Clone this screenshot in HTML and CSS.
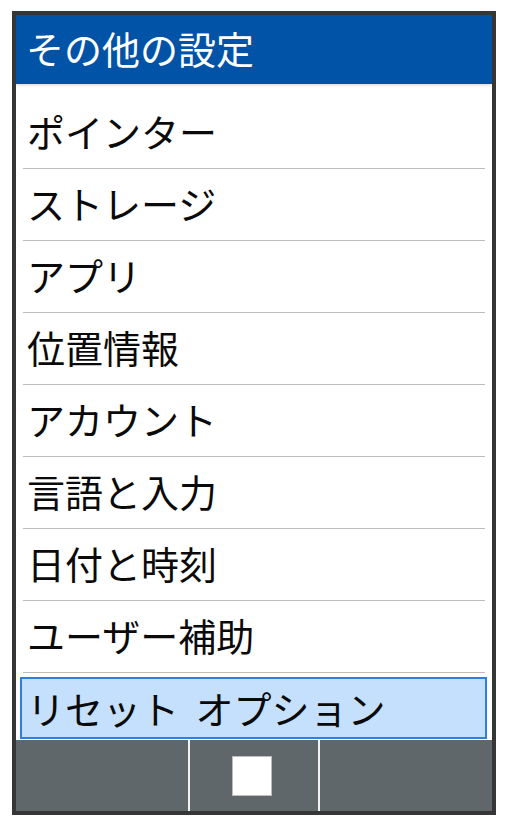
FILE: index.html
```html
<!DOCTYPE html>
<html lang="ja">
<head>
<meta charset="utf-8">
<link rel="stylesheet" href="styles.css">
</head>
<body>
<div class="phone">
  <header class="title-bar">その他の設定</header>
  <ul class="menu">
    <li class="item">ポインター</li>
    <li class="item">ストレージ</li>
    <li class="item">アプリ</li>
    <li class="item">位置情報</li>
    <li class="item">アカウント</li>
    <li class="item">言語と入力</li>
    <li class="item">日付と時刻</li>
    <li class="item">ユーザー補助</li>
    <li class="item selected">リセット オプション</li>
  </ul>
  <footer class="softkeys">
    <div class="key"></div>
    <div class="key center"><span class="stop"></span></div>
    <div class="key"></div>
  </footer>
</div>
</body>
</html>
```
FILE: styles.css
```css
html, body {
  margin: 0;
  padding: 0;
  background: #ffffff;
}
body {
  font-family: "Noto Sans CJK JP", "Noto Sans", sans-serif;
}
.phone {
  box-sizing: border-box;
  margin: 11px 0 0 12px;
  width: 484px;
  height: 804px;
  border: 4px solid #363636;
  display: flex;
  flex-direction: column;
  overflow: hidden;
  background: #fff;
}
.title-bar {
  height: 65px;
  padding-bottom: 4px;
  flex: none;
  background: #0053a6;
  color: #fff;
  font-size: 38px;
  line-height: 65px;
  padding-left: 10px;
  box-shadow: 0 1px 3px rgba(0, 0, 0, 0.18);
  position: relative;
  z-index: 1;
}
.menu {
  list-style: none;
  margin: 0;
  padding: 13px 0 0 0;
  flex: 1;
  display: flex;
  flex-direction: column;
}
.item {
  height: 67px;
  padding-bottom: 4px;
  border-bottom: 1px solid #bdbdbd;
  margin: 0 7px;
  padding-left: 4px;
  font-size: 38px;
  line-height: 67px;
  color: #0a0a0a;
  white-space: nowrap;
}
.item.selected {
  margin: 4px 5px 0 4px;
  height: 58px;
  padding-bottom: 0;
  line-height: 58px;
  border: 2px solid #2e7fe0;
  background: #c5e0fc;
  padding-left: 5px;
  word-spacing: 8px;
}
.softkeys {
  flex: none;
  height: 71px;
  background: #5f676b;
  display: flex;
}
.key {
  width: 172px;
  display: flex;
  align-items: center;
  justify-content: center;
}
.key.center {
  width: 128px;
  border-left: 2px solid #f2f2f2;
  border-right: 2px solid #f2f2f2;
}
.stop {
  display: block;
  box-sizing: border-box;
  width: 40px;
  height: 40px;
  background: #fff;
  border: 1px solid #bdbdbd;
  margin-left: -4px;
}
```
